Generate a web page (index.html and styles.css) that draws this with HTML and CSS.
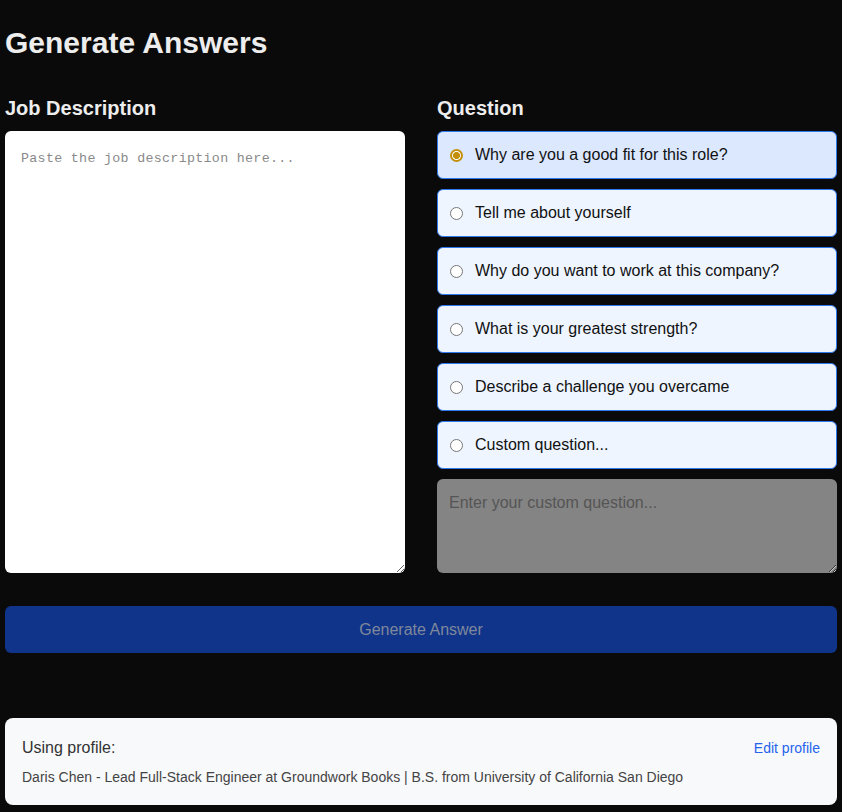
FILE: index.html
```html
<!DOCTYPE html>
<html>
<head>
    <meta charset="UTF-8">
    <title>Generate Answers</title>
    <link rel="stylesheet" href="styles.css">
</head>
<body>
    <div class="page">
        <h1>Generate Answers</h1>

        <div class="columns">
            <div class="column">
                <h2>Job Description</h2>
                <textarea class="job-input" placeholder="Paste the job description here..."></textarea>
            </div>

            <div class="column">
                <h2>Question</h2>
                <div class="options">
                    <label class="option selected"><input type="radio" name="question" checked> Why are you a good fit for this role?</label>
                    <label class="option"><input type="radio" name="question"> Tell me about yourself</label>
                    <label class="option"><input type="radio" name="question"> Why do you want to work at this company?</label>
                    <label class="option"><input type="radio" name="question"> What is your greatest strength?</label>
                    <label class="option"><input type="radio" name="question"> Describe a challenge you overcame</label>
                    <label class="option"><input type="radio" name="question"> Custom question...</label>
                    <textarea class="custom-input" placeholder="Enter your custom question..." disabled></textarea>
                </div>
            </div>
        </div>

        <button type="button" class="generate" disabled>Generate Answer</button>

        <div class="profile">
            <div class="profile-top">
                <span class="profile-label">Using profile:</span>
                <a href="#" class="edit-link">Edit profile</a>
            </div>
            <p class="profile-info">Daris Chen - Lead Full-Stack Engineer at Groundwork Books | B.S. from University of California San Diego</p>
        </div>
    </div>
</body>
</html>
```

FILE: styles.css
```css
body {
    margin: 0;
    background-color: #0a0a0a;
    font-family: "Liberation Sans", Arial, sans-serif;
    color: #ededed;
}
.page {
    padding: 25px 5px 9px;
}
h1 {
    margin: 0 0 35px;
    font-size: 30px;
    line-height: 36px;
    font-weight: bold;
}
h2 {
    margin: 0 0 11px;
    font-size: 20px;
    line-height: 24px;
    font-weight: bold;
}
.columns {
    display: grid;
    grid-template-columns: 1fr 1fr;
    gap: 32px;
}
.column {
    display: flex;
    flex-direction: column;
}
.job-input {
    flex: 1;
    box-sizing: border-box;
    padding: 20px 16px 16px;
    border: none;
    border-radius: 6px;
    background-color: #fff;
    font-family: "Liberation Mono", monospace;
    font-size: 13.33px;
    letter-spacing: 0.3px;
    color: #222;
}
.job-input::placeholder {
    color: #8a8a8a;
}
.options {
    display: flex;
    flex-direction: column;
    gap: 10px;
}
.option {
    display: flex;
    align-items: center;
    gap: 12px;
    height: 48px;
    box-sizing: border-box;
    padding: 0 12px;
    border: 1px solid #2f78f0;
    border-radius: 6px;
    background-color: #eef5ff;
    color: #111;
    font-size: 16px;
    cursor: pointer;
}
.option.selected {
    background-color: #dbe8fe;
}
.option input {
    appearance: none;
    margin: 0;
    width: 13px;
    height: 13px;
    box-sizing: border-box;
    border: 1px solid #767676;
    border-radius: 50%;
    background-color: #fff;
}
.option input:checked {
    border: 2px solid #c4900a;
    background: radial-gradient(circle, #c4900a 0 3.2px, #fff 3.8px);
}
.custom-input {
    height: 94px;
    box-sizing: border-box;
    padding: 15px 12px 12px;
    border: none;
    border-radius: 6px;
    background-color: #848484;
    font-family: "Liberation Sans", Arial, sans-serif;
    font-size: 16px;
}
.custom-input::placeholder {
    color: #555;
}
.generate {
    display: block;
    width: 100%;
    height: 47px;
    margin-top: 33px;
    border: none;
    border-radius: 6px;
    background-color: #10348a;
    color: #7f889c;
    font-family: "Liberation Sans", Arial, sans-serif;
    font-size: 16px;
}
.profile {
    margin-top: 65px;
    padding: 21px 17px 20px 17px;
    border-radius: 8px;
    background-color: #f8f9fb;
}
.profile-top {
    display: flex;
    justify-content: space-between;
    align-items: center;
}
.profile-label {
    font-size: 16px;
    color: #333;
}
.edit-link {
    font-size: 14px;
    color: #2563eb;
    text-decoration: none;
}
.profile-info {
    margin: 12px 0 0;
    font-size: 14px;
    color: #444;
}
```
